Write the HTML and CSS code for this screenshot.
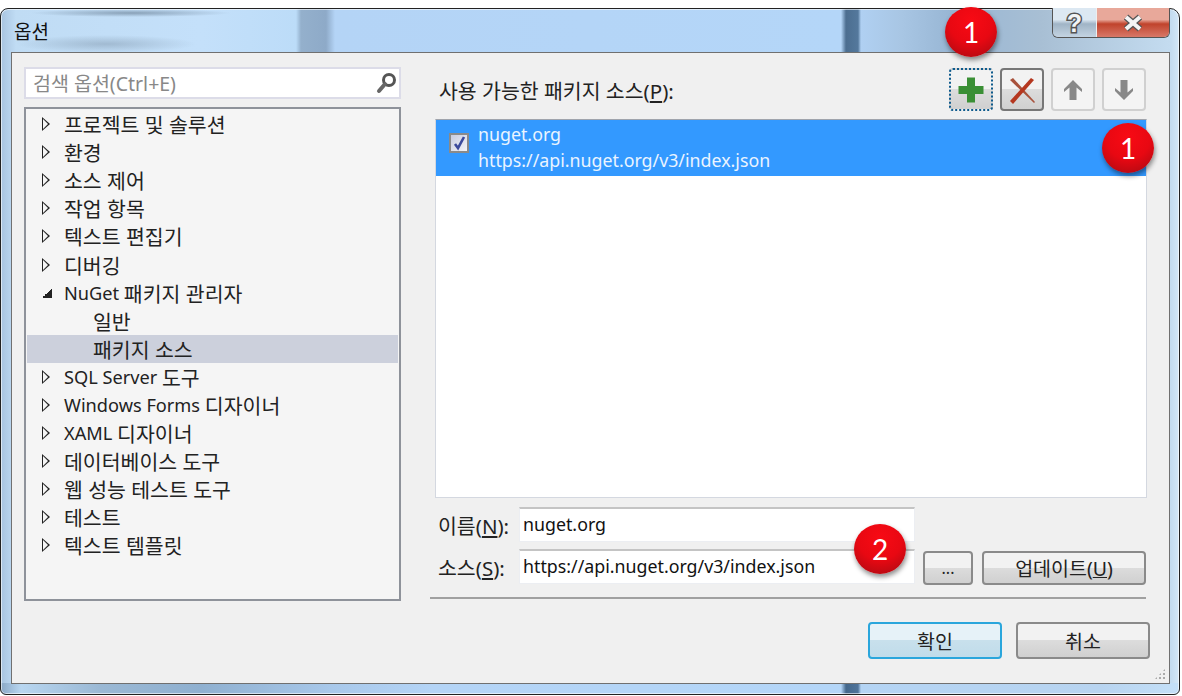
FILE: index.html
```html
<!DOCTYPE html>
<html lang="ko">
<head>
    <meta charset="UTF-8">
    <title>옵션</title>
    <link rel="stylesheet" href="styles.css">
</head>
<body>
    <div class="window">
        <div class="titlebar">
            <span class="title">옵션</span>
            <div class="caption-btns">
                <span class="cap-help">?</span>
                <span class="cap-close">
                    <svg width="22" height="18" viewBox="0 0 22 18"><path d="M4 3 L18 15 M18 3 L4 15" stroke="#555" stroke-width="6.5"/><path d="M4 3 L18 15 M18 3 L4 15" stroke="#f4f4f4" stroke-width="4"/></svg>
                </span>
            </div>
        </div>
        <div class="panel">
            <div class="left-col">
                <div class="search">
                    <span>검색 옵션(Ctrl+E)</span>
                    <svg width="22" height="22" viewBox="0 0 22 22"><circle cx="13" cy="8" r="5.5" fill="#fff" stroke="#555" stroke-width="3"/><path d="M9 12 L3 19" stroke="#666" stroke-width="4" stroke-linecap="round"/></svg>
                </div>
                <ul class="tree">
                    <li><i class="arrow"></i>프로젝트 및 솔루션</li>
                    <li><i class="arrow"></i>환경</li>
                    <li><i class="arrow"></i>소스 제어</li>
                    <li><i class="arrow"></i>작업 항목</li>
                    <li><i class="arrow"></i>텍스트 편집기</li>
                    <li><i class="arrow"></i>디버깅</li>
                    <li><i class="arrow open"></i><span class="en">NuGet&nbsp;</span>패키지 관리자</li>
                    <li class="child">일반</li>
                    <li class="child selected">패키지 소스</li>
                    <li><i class="arrow"></i><span class="en">SQL Server&nbsp;</span>도구</li>
                    <li><i class="arrow"></i><span class="en">Windows Forms&nbsp;</span>디자이너</li>
                    <li><i class="arrow"></i><span class="en">XAML&nbsp;</span>디자이너</li>
                    <li><i class="arrow"></i>데이터베이스 도구</li>
                    <li><i class="arrow"></i>웹 성능 테스트 도구</li>
                    <li><i class="arrow"></i>테스트</li>
                    <li><i class="arrow"></i>텍스트 템플릿</li>
                </ul>
            </div>
            <div class="right-col">
                <div class="source-head">
                    <label>사용 가능한 패키지 소스(<u>P</u>):</label>
                    <div class="tools">
                        <button class="tool focused">
                            <svg width="30" height="30" viewBox="0 0 30 30"><path d="M11 2.5h8V11h8.5v8H19v8.5h-8V19H2.5v-8H11z" fill="#3a8f35"/></svg>
                        </button>
                        <button class="tool">
                            <svg width="30" height="30" viewBox="0 0 30 30"><path d="M3 5 L6 3 L28 27 L27 28 Z" fill="#a8523c"/><path d="M3 26 L6 29 L27 5 L24 3 Z" fill="#b5371f"/></svg>
                        </button>
                        <button class="tool off">
                            <svg width="30" height="30" viewBox="0 0 30 30"><path d="M15 5 L24 14 L24 17 L18.5 12.5 L18.5 25 L11.5 25 L11.5 12.5 L6 17 L6 14 Z" fill="#888"/></svg>
                        </button>
                        <button class="tool off">
                            <svg width="30" height="30" viewBox="0 0 30 30"><path d="M15 25 L24 16 L24 13 L18.5 17.5 L18.5 5 L11.5 5 L11.5 17.5 L6 13 L6 16 Z" fill="#888"/></svg>
                        </button>
                    </div>
                </div>
                <div class="source-list">
                    <div class="source-item">
                        <span class="check">
                            <svg width="15" height="15" viewBox="0 0 15 15"><path d="M3 8 L6 12 L12 1" fill="none" stroke="#3c4a9c" stroke-width="2.6"/></svg>
                        </span>
                        <div class="source-text">
                            <div>nuget.org</div>
                            <div>https://api.nuget.org/v3/index.json</div>
                        </div>
                    </div>
                </div>
                <div class="form-row">
                    <label>이름(<u>N</u>):</label>
                    <div class="field">nuget.org</div>
                </div>
                <div class="form-row">
                    <label>소스(<u>S</u>):</label>
                    <div class="field">https://api.nuget.org/v3/index.json</div>
                    <button class="btn btn-dots">...</button>
                    <button class="btn btn-update">업데이트(<u>U</u>)</button>
                </div>
            </div>
            <div class="footer">
                <button class="btn btn-main primary">확인</button>
                <button class="btn btn-main">취소</button>
            </div>
            <div class="grip"></div>
        </div>
    </div>
    <span class="badge b1">1</span>
    <span class="badge b2">1</span>
    <span class="badge b3">2</span>
</body>
</html>
```
FILE: styles.css
```css
* {
    box-sizing: border-box;
}
html, body {
    margin: 0;
    height: 696px;
    overflow: hidden;
}
body {
    position: relative;
    background: #fff;
    padding: 8px 2px 1px 0;
    font-family: 'Noto Sans', 'Noto Sans CJK KR', sans-serif;
    font-size: 20.5px;
    color: #222;
}
button {
    font: inherit;
    color: inherit;
    padding: 0;
}
.window {
    height: 100%;
    display: flex;
    flex-direction: column;
    border: 1px solid #222;
    border-radius: 8px 10px 6px 6px;
    padding: 0 9px 10px 10px;
    background:
        radial-gradient(ellipse 100px 4px at 130px 4px, rgba(80, 100, 120, .5), transparent),
        radial-gradient(ellipse 90px 9px at 105px 35px, rgba(100, 120, 140, .35), transparent),
        linear-gradient(90deg, #8aa8c6 0, #b8d6f0 20px, #9ab8d4 100px, #8fb0d0 200px, #a8c8ea 330px, #b4d4f6 430px, #b4d6f8 840px, #44688c 845px, #50749a 857px, #b4d4f4 860px, #b8d4f0 1100px, #c4e0f8 100%) bottom / 100% 11px no-repeat,
        linear-gradient(90deg, #a8c4e0 0, #c0dcf4 15px, #c4e0fa 200px, #bcdcf8 295px, #94b0cc 300px, #8eaac8 325px, #b4d4f6 334px, #b4d6f8 840px, #4c6e90 845px, #54789c 857px, #b0d0f2 860px, #a8c6e4 900px, #98b6d4 950px, #a8bfd4 1040px, #c4dcf0 1170px, #d4e8f8 100%);
    box-shadow: inset 0 0 0 1px rgba(255, 255, 255, .6);
}
.titlebar {
    height: 43px;
    display: flex;
    justify-content: space-between;
    flex-shrink: 0;
}
.title {
    margin: 8px 0 0 3px;
    font-size: 19px;
    color: #111;
}
.caption-btns {
    display: flex;
    height: 30px;
    margin-top: -1px;
    border: 1px solid #555;
    border-top: 0;
    border-radius: 0 0 6px 6px;
    overflow: hidden;
}
.cap-help {
    width: 44px;
    text-align: center;
    font-family: 'Liberation Sans', sans-serif;
    font-weight: bold;
    font-size: 25px;
    line-height: 30px;
    color: #f2f4f6;
    -webkit-text-stroke: 3px #555;
    paint-order: stroke fill;
    background: linear-gradient(#dce8f2 40%, #a0b4c6 55%, #c4d4e2);
    border-right: 1px solid #eee;
}
.cap-close {
    width: 72px;
    display: flex;
    align-items: center;
    justify-content: center;
    background: linear-gradient(#e8a89a 40%, #c0432c 55%, #d87868);
}
.panel {
    flex: 1;
    position: relative;
    display: grid;
    grid-template-columns: 377px 712px;
    column-gap: 34px;
    grid-template-rows: 1fr 86px;
    padding: 14px 0 0 12px;
    border: 1px solid #707070;
    background: #f0f0f0;
}
.left-col {
    grid-row: 1 / 3;
    display: flex;
    flex-direction: column;
    height: 534px;
}
.search {
    height: 32px;
    display: flex;
    align-items: center;
    justify-content: space-between;
    padding: 0 1px 0 7px;
    margin-bottom: 8px;
    font-size: 19.5px;
    background: #fff;
    border: 2px solid #dcdce8;
    color: #888;
}
.search span {
    margin-top: -2px;
}
.tree {
    flex: 1;
    margin: 0;
    padding: 1px 1px 0;
    list-style: none;
    background: #f5f5f5;
    border: 2px solid #8e929a;
}
.tree li {
    display: flex;
    align-items: center;
    height: 28.1px;
    padding-left: 15px;
    white-space: nowrap;
    color: #222;
}
.tree li.child {
    padding-left: 66px;
}
.tree li.selected {
    background: #ccd0dc;
}
.tree .en {
    font-size: 18.2px;
}
.arrow {
    width: 0;
    height: 0;
    margin-right: 14px;
    border: 7px solid transparent;
    border-left: 8px solid #222;
    border-right: 0;
    position: relative;
}
.arrow::after {
    content: "";
    position: absolute;
    left: -7px;
    top: -5px;
    border: 5px solid transparent;
    border-left: 5px solid #f5f5f5;
    border-right: 0;
}
.arrow.open {
    width: 10px;
    height: 10px;
    margin-right: 12px;
    border: 0;
    background: linear-gradient(135deg, transparent 50%, #222 50%);
}
.arrow.open::after {
    display: none;
}
.source-head {
    height: 52px;
    display: flex;
    align-items: flex-start;
    justify-content: space-between;
}
.source-head label {
    margin: 8px 0 0 4px;
}
.tools {
    display: flex;
    gap: 7px;
    padding: 1px 1px 0 0;
}
.tool {
    width: 44px;
    height: 43px;
    display: flex;
    align-items: center;
    justify-content: center;
    border: 2px solid #777;
    border-radius: 4px;
    background: linear-gradient(#f2f2f2 50%, #dcdcdc 50%, #d0d0d0);
}
.tool.focused {
    border: 2px dotted #0d5a8c;
}
.tool.off {
    background: #f4f4f4;
    border-color: #d0d0d0;
}
.source-list {
    height: 379px;
    background: #fff;
    border: 1px solid #d4d8e0;
    border-top: 1px solid #a0a4ac;
}
.source-item {
    height: 56px;
    display: flex;
    align-items: flex-start;
    gap: 9px;
    padding-left: 13px;
    background: #3399ff;
    color: #eaf4ff;
}
.check {
    width: 20px;
    height: 20px;
    margin-top: 13px;
    display: flex;
    align-items: center;
    justify-content: center;
    background: linear-gradient(135deg, #c8cce0, #f4f4f8);
    border: 2px solid #8a8a8a;
}
.source-text {
    margin-top: 1px;
    font-size: 17.8px;
    line-height: 26px;
}
.form-row {
    height: 35px;
    margin-top: 7px;
    display: flex;
    align-items: center;
}
.form-row:nth-of-type(3) {
    margin-top: 9px;
}
.form-row label {
    width: 84px;
    padding-left: 3px;
}
.field {
    width: 396px;
    height: 35px;
    font-size: 17.8px;
    line-height: 31px;
    padding-left: 3px;
    background: #fff;
    border: 1px solid #eceef2;
    border-top: 2px solid #c4c4c4;
    color: #111;
}
.btn {
    font-size: 19.5px;
    border: 2px solid #8a8a8a;
    border-radius: 4px;
    background: linear-gradient(#f2f2f2 50%, #dcdcdc 50%, #d0d0d0);
}
.btn-dots {
    width: 50px;
    height: 34px;
    margin: 2px 0 0 8px;
    font-size: 16px;
}
.btn-update {
    width: 164px;
    height: 34px;
    margin: 2px 0 0 9px;
}
.footer {
    grid-column: 2;
    display: flex;
    justify-content: flex-end;
    align-items: flex-start;
    gap: 14px;
    margin: 0 1px 0 -5px;
    padding-top: 23px;
    border-top: 2px solid #a0a0a0;
}
.btn-main {
    width: 134px;
    height: 37px;
}
.btn-main:last-child {
    margin-right: -4px;
}
.primary {
    border-color: #2aa6dc;
    background: linear-gradient(#e6f2f8 50%, #c8e0ec 50%, #c0dcea);
}
.grip {
    position: absolute;
    right: 3px;
    bottom: 3px;
    width: 12px;
    height: 12px;
    background: radial-gradient(circle, #aaa 1px, transparent 1.2px) 0 0 / 4px 4px;
    clip-path: polygon(100% 0, 100% 100%, 0 100%);
}
.badge {
    position: absolute;
    width: 52px;
    height: 50px;
    display: flex;
    align-items: center;
    justify-content: center;
    border-radius: 50%;
    background: radial-gradient(circle at 50% 28%, #f80a14 0, #e80812 50%, #b80a12 85%, #900a10 100%);
    box-shadow: 1px 3px 5px rgba(0, 0, 0, .45);
    color: #fff;
    font-size: 28px;
    font-family: 'Lato', sans-serif;
}
.b1 {
    left: 945px;
    top: 7px;
}
.b2 {
    left: 1102px;
    top: 123px;
}
.b3 {
    left: 854px;
    top: 524px;
}
```
